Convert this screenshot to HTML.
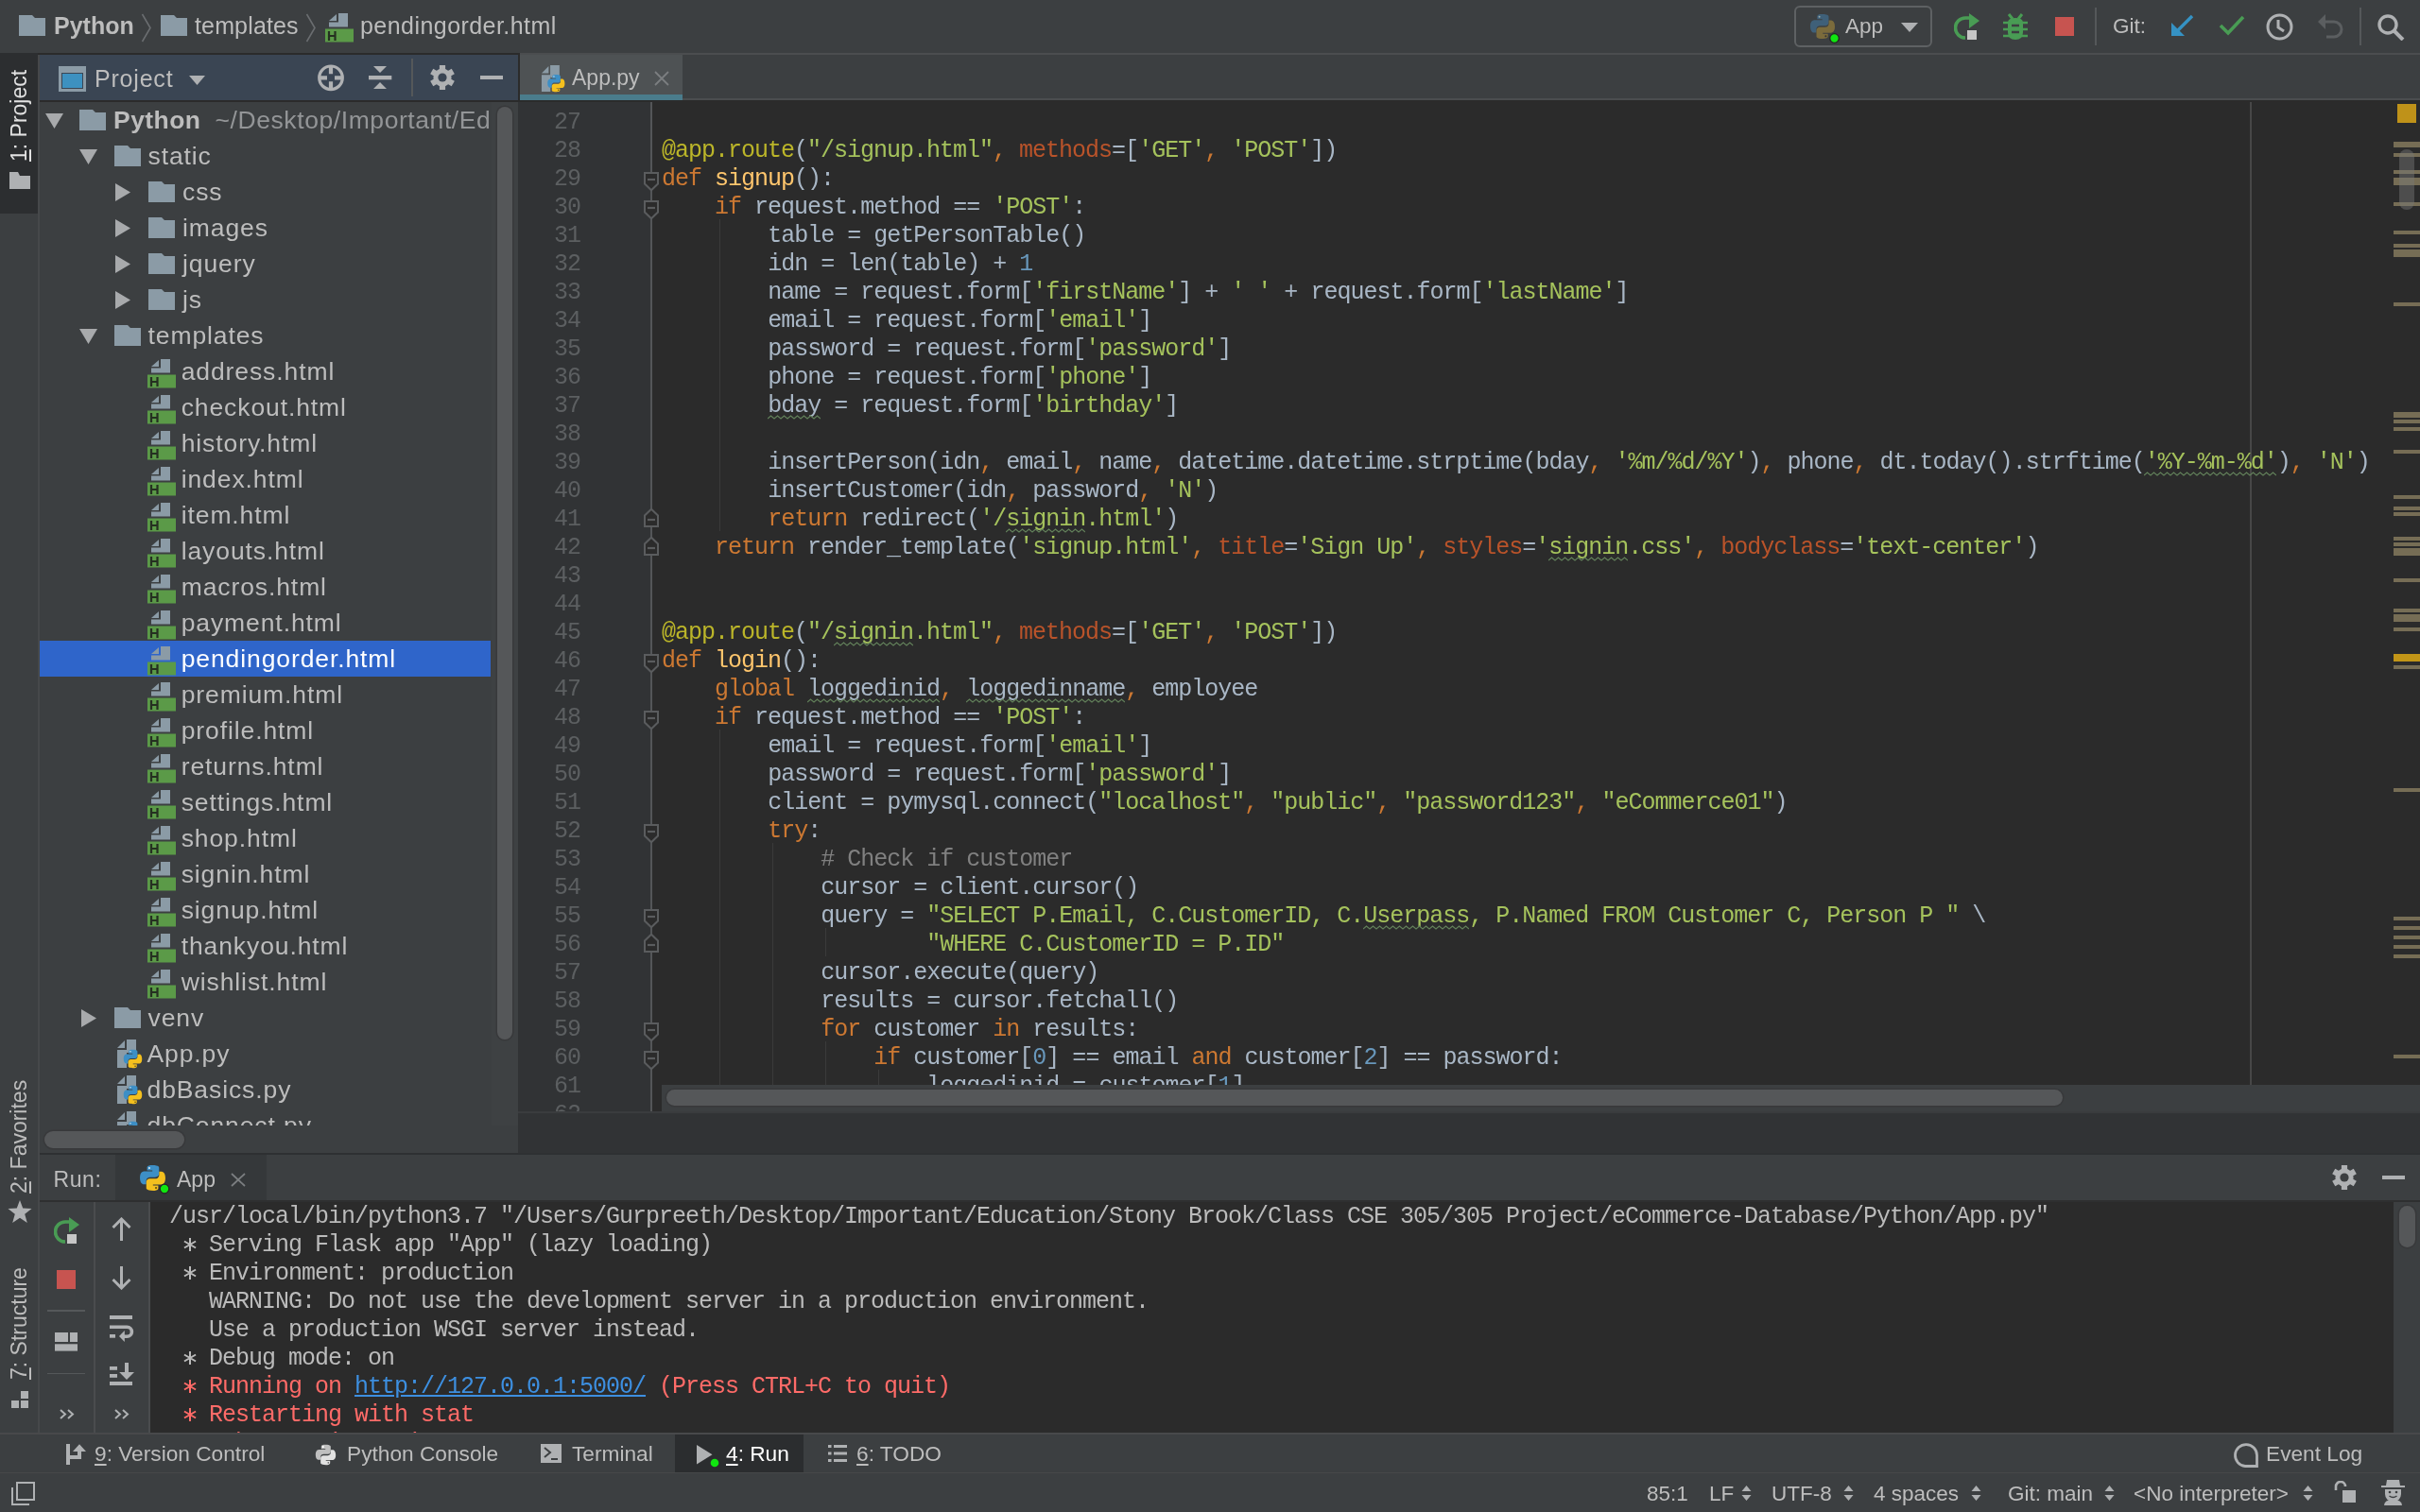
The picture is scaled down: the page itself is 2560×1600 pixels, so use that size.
<!DOCTYPE html><html><head><meta charset="utf-8"><style>
html,body{margin:0;padding:0;}
body{width:2560px;height:1600px;position:relative;overflow:hidden;background:#3c3f41;font-family:'Liberation Sans', sans-serif;}
.t{position:absolute;white-space:nowrap;line-height:0;height:0;font-family:'Liberation Sans', sans-serif;}
.t>*{}
.m{position:absolute;white-space:pre;font-family:'Liberation Mono', monospace;font-size:25px;letter-spacing:-1.0022px;line-height:0;height:0;}
</style></head><body>
<div style="position:absolute;left:0;top:0;width:2560px;height:1600px;will-change:transform">

<svg width="0" height="0" style="position:absolute">
<defs>
 <symbol id="folder" viewBox="0 0 28 22"><path d="M0 0H14L17 3H28V22H0Z" fill="#8b9ba6"/></symbol>
 <symbol id="html" viewBox="0 0 30 31">
   <path d="M4 8L12 1V8Z" fill="#8b9ba6"/>
   <path d="M14 0H24V14.5H4V9.6H14Z" fill="#8b9ba6"/>
   <rect x="0" y="16.5" width="30" height="14" fill="#5b9a48"/>
   <path d="M4 19V29M4 24H10.5M10.5 19V29" stroke="#253021" stroke-width="2.2" fill="none"/>
 </symbol>
 <symbol id="py" viewBox="0 0 28 28">
   <path d="M13.5 1C8 1 8.3 3.4 8.3 3.4V6.3H13.7V7.2H5.6S1 6.7 1 13.7c0 7 4 6.8 4 6.8H7.4v-3.3s-.1-4 4-4h5.3s3.8.1 3.8-3.7V3.6S21 1 13.5 1Z" fill="#3d8fc6"/>
   <circle cx="10.6" cy="3.8" r="1" fill="#dfe8ee"/>
   <path d="M14.5 27c5.5 0 5.2-2.4 5.2-2.4V21.7H14.3v-.9h8.1S27 21.3 27 14.3c0-7-4-6.8-4-6.8H20.6v3.3s.1 4-4 4H11.3s-3.8-.1-3.8 3.7v5.9S7 27 14.5 27Z" fill="#f4c01e"/>
   <circle cx="17.4" cy="24.2" r="1" fill="#5a4a10"/>
 </symbol>
 <symbol id="pydim" viewBox="0 0 28 28">
   <path d="M13.5 1C8 1 8.3 3.4 8.3 3.4V6.3H13.7V7.2H5.6S1 6.7 1 13.7c0 7 4 6.8 4 6.8H7.4v-3.3s-.1-4 4-4h5.3s3.8.1 3.8-3.7V3.6S21 1 13.5 1Z" fill="#3f6079"/>
   <circle cx="10.6" cy="3.8" r="1" fill="#9aa"/>
   <path d="M14.5 27c5.5 0 5.2-2.4 5.2-2.4V21.7H14.3v-.9h8.1S27 21.3 27 14.3c0-7-4-6.8-4-6.8H20.6v3.3s.1 4-4 4H11.3s-3.8-.1-3.8 3.7v5.9S7 27 14.5 27Z" fill="#7b6b3c"/>
   <circle cx="17.4" cy="24.2" r="1" fill="#333"/>
 </symbol>
 <symbol id="pyfile" viewBox="0 0 30 31">
   <path d="M1 9L9 1V9Z" fill="#8b9ba6"/>
   <path d="M11 0H21V12H11ZM1 11H11V30H1Z" fill="#8b9ba6"/>
   <rect x="11" y="0" width="10" height="14" fill="#8b9ba6"/>
   <use href="#py" x="7" y="10" width="21" height="21"/>
 </symbol>
 <symbol id="foldS" viewBox="0 0 16 20"><path d="M1 1H15V12.5L8 19.3L1 12.5Z" fill="#2b2b2b" stroke="#5a5c5e" stroke-width="2"/><path d="M4 8H12" stroke="#5a5c5e" stroke-width="2.2"/></symbol>
 <symbol id="foldE" viewBox="0 0 16 20"><path d="M1 19H15V7.5L8 0.7L1 7.5Z" fill="#2b2b2b" stroke="#5a5c5e" stroke-width="2"/><path d="M4 12H12" stroke="#5a5c5e" stroke-width="2.2"/></symbol>
  <symbol id="gear" viewBox="-13 -13 26 26"><g fill="#afb1b3"><circle r="9.6"/><rect x="-3.1" y="-13" width="6.2" height="26"/><rect x="-3.1" y="-13" width="6.2" height="26" transform="rotate(60)"/><rect x="-3.1" y="-13" width="6.2" height="26" transform="rotate(120)"/></g><circle r="4.6" fill="var(--bg)"/></symbol>
 <symbol id="updown" viewBox="0 0 11 20"><path d="M0.5 8L5.5 2L10.5 8ZM0.5 12L5.5 18L10.5 12Z" fill="#aeb0b2"/></symbol>
</defs></svg>

<div style="position:absolute;left:0px;top:0px;width:2560px;height:56px;background:#3c3f41;"></div>
<div style="position:absolute;left:0px;top:56px;width:2560px;height:2px;background:#4b4d4f;"></div>
<div style="position:absolute;left:40px;top:56px;width:510px;height:2px;background:#2b2b2b;"></div>
<div style="position:absolute;left:0px;top:56px;width:40px;height:1462px;background:#3c3f41;"></div>
<div style="position:absolute;left:0px;top:56px;width:40px;height:170px;background:#2c2e30;"></div>
<div style="position:absolute;left:40px;top:58px;width:2px;height:1459px;background:#46484a;"></div>
<svg style="position:absolute;left:20px;top:16px" width="28" height="22"><use href="#folder"/></svg>
<div class="t" style="left:57px;top:26.83px;font-size:25px;color:#bdbdbd;font-weight:bold;">Python</div>
<svg style="position:absolute;left:149px;top:14px" width="12" height="31"><path d="M1.5 1L10 15.5L1.5 30" stroke="#6a6d70" stroke-width="1.6" fill="none"/></svg>
<svg style="position:absolute;left:170px;top:16px" width="28" height="22"><use href="#folder"/></svg>
<div class="t" style="left:206px;top:26.83px;font-size:25px;color:#bdbdbd;letter-spacing:0.15px;">templates</div>
<svg style="position:absolute;left:323px;top:14px" width="12" height="31"><path d="M1.5 1L10 15.5L1.5 30" stroke="#6a6d70" stroke-width="1.6" fill="none"/></svg>
<svg style="position:absolute;left:344px;top:13.5px" width="30" height="31"><use href="#html"/></svg>
<div class="t" style="left:381px;top:26.83px;font-size:25px;color:#bdbdbd;letter-spacing:0.45px;">pendingorder.html</div>
<div style="position:absolute;left:1898px;top:6px;width:142px;height:40px;border:2px solid #5e6163;border-radius:6px;"></div>
<svg style="position:absolute;left:1914px;top:14px" width="28" height="28"><use href="#pydim"/></svg>
<svg style="position:absolute;left:1934px;top:34px" width="13" height="13"><circle cx="6.5" cy="6.5" r="4.8" fill="#10e610" stroke="#262626" stroke-width="1.3"/></svg>
<div class="t" style="left:1952px;top:28.20px;font-size:22.5px;color:#bdbdbd;">App</div>
<svg style="position:absolute;left:2010px;top:23px" width="20" height="12"><path d="M1 1H19L10 11Z" fill="#aeb0b2"/></svg>
<svg style="position:absolute;left:2067px;top:14px" width="28" height="28" viewBox="0 0 28 28">
<path d="M12 26A10.5 10.5 0 0 1 12 5H17" stroke="#499c54" stroke-width="3.6" fill="none"/>
<path d="M16 0L27 8L16 16Z" fill="#499c54"/><rect x="14" y="18" width="10" height="10" fill="#c6c6c6"/></svg>
<svg style="position:absolute;left:2119px;top:14px" width="26" height="28" viewBox="0 0 26 28">
<path d="M6 1L10 6M20 1L16 6" stroke="#499c54" stroke-width="3"/>
<path d="M5 10Q5 5 13 5Q21 5 21 10V20Q21 28 13 28Q5 28 5 20Z" fill="#499c54"/>
<path d="M0 10H26M0 17H26M0 24H26" stroke="#499c54" stroke-width="2.6"/>
<path d="M9 13H17M9 20H17" stroke="#3c3f41" stroke-width="2.6"/></svg>
<div style="position:absolute;left:2174px;top:18px;width:20px;height:20px;background:#c75450;"></div>
<div style="position:absolute;left:2215.5px;top:8px;width:2px;height:40px;background:#55585a;"></div>
<div class="t" style="left:2235px;top:28.20px;font-size:22.5px;color:#bdbdbd;">Git:</div>
<svg style="position:absolute;left:2296px;top:15px" width="25" height="24" viewBox="0 0 25 24">
<path d="M23 2L6 19" stroke="#3592c4" stroke-width="3.4"/><path d="M1 9V23H15Z" fill="#3592c4"/></svg>
<svg style="position:absolute;left:2347px;top:16px" width="28" height="22" viewBox="0 0 28 22">
<path d="M2 11L10 19L26 2" stroke="#499c54" stroke-width="3.6" fill="none"/></svg>
<svg style="position:absolute;left:2397px;top:14px" width="29" height="29" viewBox="0 0 29 29">
<circle cx="14.5" cy="14.5" r="12.5" stroke="#afb1b3" stroke-width="3" fill="none"/><path d="M13 7V15L19 19" stroke="#afb1b3" stroke-width="3" fill="none"/></svg>
<svg style="position:absolute;left:2451px;top:14px" width="28" height="27" viewBox="0 0 28 27">
<path d="M3 9H18A8 8 0 0 1 18 25H10" stroke="#5b5e60" stroke-width="3" fill="none"/><path d="M9 1V17L1 9Z" fill="#5b5e60"/></svg>
<div style="position:absolute;left:2495.5px;top:8px;width:2px;height:40px;background:#55585a;"></div>
<svg style="position:absolute;left:2515px;top:15px" width="30" height="28" viewBox="0 0 30 28">
<circle cx="11" cy="11" r="9" stroke="#afb1b3" stroke-width="3.4" fill="none"/><path d="M17.5 17.5L27 27" stroke="#afb1b3" stroke-width="4"/></svg>
<div style="position:absolute;left:42px;top:58px;width:506px;height:48px;background:#3a4553;"></div>
<div style="position:absolute;left:42px;top:106px;width:506px;height:2px;background:#2b2b2b;"></div>
<div style="position:absolute;left:548px;top:56px;width:2px;height:52px;background:#2b2b2b;"></div>
<div style="position:absolute;left:42px;top:108px;width:506px;height:1113px;background:#3c3f41;"></div>
<svg style="position:absolute;left:62px;top:70px" width="29" height="27" viewBox="0 0 29 27">
<rect x="1.5" y="1.5" width="26" height="24" fill="none" stroke="#8b9ba6" stroke-width="3"/><rect x="1" y="1" width="27" height="6" fill="#8b9ba6"/>
<rect x="4" y="8" width="21" height="15" fill="#3d91c0"/></svg>
<div class="t" style="left:100px;top:83.33px;font-size:25px;color:#bdbdbd;letter-spacing:0.8px;">Project</div>
<svg style="position:absolute;left:199px;top:79px" width="19" height="12"><path d="M1 1H18L9.5 11Z" fill="#aeb0b2"/></svg>
<svg style="position:absolute;left:336px;top:67.5px" width="29" height="29" viewBox="0 0 29 29">
<circle cx="14" cy="14.3" r="12.3" stroke="#afb1b3" stroke-width="3.2" fill="none"/>
<path d="M14 1V10.3M14 18.3V28M1 14.3H10M18 14.3H27" stroke="#afb1b3" stroke-width="4.2"/></svg>
<svg style="position:absolute;left:390px;top:70px" width="25" height="25" viewBox="0 0 25 25">
<path d="M5 0H19L12 7Z M5 24H19L12 17Z" fill="#afb1b3"/><rect x="0" y="10" width="24.3" height="4.3" fill="#afb1b3"/></svg>
<div style="position:absolute;left:434.5px;top:62px;width:2px;height:40px;background:#55585a;"></div>
<svg style="position:absolute;left:455px;top:69px;--bg:#3a4553" width="26" height="26"><use href="#gear"/></svg>
<div style="position:absolute;left:508px;top:80px;width:24px;height:4px;background:#afb1b3;"></div>
<div style="position:absolute;left:42px;top:108px;width:477px;height:1083px;overflow:hidden;">
<svg style="position:absolute;left:5.5px;top:12px" width="19" height="16"><path d="M0 0H19L9.5 16Z" fill="#a8aaac"/></svg>
<svg style="position:absolute;left:42.0px;top:8px" width="28" height="22"><use href="#folder"/></svg>
<div class="t" style="left:78.0px;top:19.41px;font-size:26.5px;letter-spacing:0.9px;color:#bdbdbd"><b style="letter-spacing:0.45px">Python</b><span style="margin-left:15px;color:#939597;letter-spacing:0.58px">~/Desktop/Important/Education/Stony Brook</span></div>
<svg style="position:absolute;left:42.0px;top:50px" width="19" height="16"><path d="M0 0H19L9.5 16Z" fill="#a8aaac"/></svg>
<svg style="position:absolute;left:78.5px;top:46px" width="28" height="22"><use href="#folder"/></svg>
<div class="t" style="left:114.5px;top:57.41px;font-size:26.5px;letter-spacing:0.9px;color:#bdbdbd">static</div>
<svg style="position:absolute;left:80.0px;top:86px" width="16" height="19"><path d="M0 0V19L16 9.5Z" fill="#a8aaac"/></svg>
<svg style="position:absolute;left:115.0px;top:84px" width="28" height="22"><use href="#folder"/></svg>
<div class="t" style="left:151.0px;top:95.41px;font-size:26.5px;letter-spacing:0.9px;color:#bdbdbd">css</div>
<svg style="position:absolute;left:80.0px;top:124px" width="16" height="19"><path d="M0 0V19L16 9.5Z" fill="#a8aaac"/></svg>
<svg style="position:absolute;left:115.0px;top:122px" width="28" height="22"><use href="#folder"/></svg>
<div class="t" style="left:151.0px;top:133.41px;font-size:26.5px;letter-spacing:0.9px;color:#bdbdbd">images</div>
<svg style="position:absolute;left:80.0px;top:162px" width="16" height="19"><path d="M0 0V19L16 9.5Z" fill="#a8aaac"/></svg>
<svg style="position:absolute;left:115.0px;top:160px" width="28" height="22"><use href="#folder"/></svg>
<div class="t" style="left:151.0px;top:171.41px;font-size:26.5px;letter-spacing:0.9px;color:#bdbdbd">jquery</div>
<svg style="position:absolute;left:80.0px;top:200px" width="16" height="19"><path d="M0 0V19L16 9.5Z" fill="#a8aaac"/></svg>
<svg style="position:absolute;left:115.0px;top:198px" width="28" height="22"><use href="#folder"/></svg>
<div class="t" style="left:151.0px;top:209.41px;font-size:26.5px;letter-spacing:0.9px;color:#bdbdbd">js</div>
<svg style="position:absolute;left:42.0px;top:240px" width="19" height="16"><path d="M0 0H19L9.5 16Z" fill="#a8aaac"/></svg>
<svg style="position:absolute;left:78.5px;top:236px" width="28" height="22"><use href="#folder"/></svg>
<div class="t" style="left:114.5px;top:247.41px;font-size:26.5px;letter-spacing:0.9px;color:#bdbdbd">templates</div>
<svg style="position:absolute;left:114px;top:271.6px" width="30" height="31"><use href="#html"/></svg>
<div class="t" style="left:149.7px;top:285.41px;font-size:26.5px;letter-spacing:0.9px;color:#bdbdbd">address.html</div>
<svg style="position:absolute;left:114px;top:309.6px" width="30" height="31"><use href="#html"/></svg>
<div class="t" style="left:149.7px;top:323.41px;font-size:26.5px;letter-spacing:0.9px;color:#bdbdbd">checkout.html</div>
<svg style="position:absolute;left:114px;top:347.6px" width="30" height="31"><use href="#html"/></svg>
<div class="t" style="left:149.7px;top:361.41px;font-size:26.5px;letter-spacing:0.9px;color:#bdbdbd">history.html</div>
<svg style="position:absolute;left:114px;top:385.6px" width="30" height="31"><use href="#html"/></svg>
<div class="t" style="left:149.7px;top:399.41px;font-size:26.5px;letter-spacing:0.9px;color:#bdbdbd">index.html</div>
<svg style="position:absolute;left:114px;top:423.6px" width="30" height="31"><use href="#html"/></svg>
<div class="t" style="left:149.7px;top:437.41px;font-size:26.5px;letter-spacing:0.9px;color:#bdbdbd">item.html</div>
<svg style="position:absolute;left:114px;top:461.6px" width="30" height="31"><use href="#html"/></svg>
<div class="t" style="left:149.7px;top:475.41px;font-size:26.5px;letter-spacing:0.9px;color:#bdbdbd">layouts.html</div>
<svg style="position:absolute;left:114px;top:499.6px" width="30" height="31"><use href="#html"/></svg>
<div class="t" style="left:149.7px;top:513.41px;font-size:26.5px;letter-spacing:0.9px;color:#bdbdbd">macros.html</div>
<svg style="position:absolute;left:114px;top:537.6px" width="30" height="31"><use href="#html"/></svg>
<div class="t" style="left:149.7px;top:551.41px;font-size:26.5px;letter-spacing:0.9px;color:#bdbdbd">payment.html</div>
<div style="position:absolute;left:0;top:570px;width:478px;height:38px;background:#2f65ca"></div>
<svg style="position:absolute;left:114px;top:575.6px" width="30" height="31"><use href="#html"/></svg>
<div class="t" style="left:149.7px;top:589.41px;font-size:26.5px;letter-spacing:0.9px;color:#ffffff">pendingorder.html</div>
<svg style="position:absolute;left:114px;top:613.6px" width="30" height="31"><use href="#html"/></svg>
<div class="t" style="left:149.7px;top:627.41px;font-size:26.5px;letter-spacing:0.9px;color:#bdbdbd">premium.html</div>
<svg style="position:absolute;left:114px;top:651.6px" width="30" height="31"><use href="#html"/></svg>
<div class="t" style="left:149.7px;top:665.41px;font-size:26.5px;letter-spacing:0.9px;color:#bdbdbd">profile.html</div>
<svg style="position:absolute;left:114px;top:689.6px" width="30" height="31"><use href="#html"/></svg>
<div class="t" style="left:149.7px;top:703.41px;font-size:26.5px;letter-spacing:0.9px;color:#bdbdbd">returns.html</div>
<svg style="position:absolute;left:114px;top:727.6px" width="30" height="31"><use href="#html"/></svg>
<div class="t" style="left:149.7px;top:741.41px;font-size:26.5px;letter-spacing:0.9px;color:#bdbdbd">settings.html</div>
<svg style="position:absolute;left:114px;top:765.6px" width="30" height="31"><use href="#html"/></svg>
<div class="t" style="left:149.7px;top:779.41px;font-size:26.5px;letter-spacing:0.9px;color:#bdbdbd">shop.html</div>
<svg style="position:absolute;left:114px;top:803.6px" width="30" height="31"><use href="#html"/></svg>
<div class="t" style="left:149.7px;top:817.41px;font-size:26.5px;letter-spacing:0.9px;color:#bdbdbd">signin.html</div>
<svg style="position:absolute;left:114px;top:841.6px" width="30" height="31"><use href="#html"/></svg>
<div class="t" style="left:149.7px;top:855.41px;font-size:26.5px;letter-spacing:0.9px;color:#bdbdbd">signup.html</div>
<svg style="position:absolute;left:114px;top:879.6px" width="30" height="31"><use href="#html"/></svg>
<div class="t" style="left:149.7px;top:893.41px;font-size:26.5px;letter-spacing:0.9px;color:#bdbdbd">thankyou.html</div>
<svg style="position:absolute;left:114px;top:917.6px" width="30" height="31"><use href="#html"/></svg>
<div class="t" style="left:149.7px;top:931.41px;font-size:26.5px;letter-spacing:0.9px;color:#bdbdbd">wishlist.html</div>
<svg style="position:absolute;left:43.5px;top:960px" width="16" height="19"><path d="M0 0V19L16 9.5Z" fill="#a8aaac"/></svg>
<svg style="position:absolute;left:78.5px;top:958px" width="28" height="22"><use href="#folder"/></svg>
<div class="t" style="left:114.5px;top:969.41px;font-size:26.5px;letter-spacing:0.9px;color:#bdbdbd">venv</div>
<svg style="position:absolute;left:81px;top:992px" width="30" height="31"><use href="#pyfile"/></svg>
<div class="t" style="left:113.5px;top:1007.41px;font-size:26.5px;letter-spacing:0.9px;color:#bdbdbd">App.py</div>
<svg style="position:absolute;left:81px;top:1030px" width="30" height="31"><use href="#pyfile"/></svg>
<div class="t" style="left:113.5px;top:1045.41px;font-size:26.5px;letter-spacing:0.9px;color:#bdbdbd">dbBasics.py</div>
<svg style="position:absolute;left:81px;top:1068px" width="30" height="31"><use href="#pyfile"/></svg>
<div class="t" style="left:113.5px;top:1083.41px;font-size:26.5px;letter-spacing:0.9px;color:#bdbdbd">dbConnect.py</div>
</div>
<div style="position:absolute;left:520px;top:108px;width:28px;height:1083px;background:#3e4143;"></div>
<div style="position:absolute;left:526px;top:113px;width:16px;height:987px;background:#555759;border-radius:9px;box-shadow:0 0 0 1.5px #38393b"></div>
<div style="position:absolute;left:47px;top:1197px;width:148px;height:18px;background:#555759;border-radius:9px;box-shadow:0 0 0 1.5px #38393b"></div>
<div style="position:absolute;left:550px;top:58px;width:2010px;height:46px;background:#3c3f41;"></div>
<div style="position:absolute;left:550px;top:104px;width:2010px;height:2px;background:#4b4d4f;"></div>
<div style="position:absolute;left:550px;top:58px;width:172px;height:42px;background:#4e5254;"></div>
<div style="position:absolute;left:550px;top:100px;width:172px;height:6px;background:#4a7c8c;"></div>
<svg style="position:absolute;left:572px;top:68px" width="28" height="31"><use href="#pyfile"/></svg>
<div class="t" style="left:605px;top:81.53px;font-size:23px;color:#bdbdbd;">App.py</div>
<svg style="position:absolute;left:692px;top:74.5px" width="16" height="16"><path d="M1 1L15 15M15 1L1 15" stroke="#7b7e80" stroke-width="1.8"/></svg>
<div style="position:absolute;left:548px;top:106px;width:2012px;height:2px;background:#2b2b2b;"></div>
<div style="position:absolute;left:548px;top:108px;width:142px;height:1068px;background:#313335;"></div>
<div style="position:absolute;left:690px;top:108px;width:1870px;height:1068px;background:#2b2b2b;"></div>
<div style="position:absolute;left:548px;top:1176px;width:2012px;height:2px;background:#3a3c3e;"></div>
<div style="position:absolute;left:548px;top:1178px;width:2012px;height:42px;background:#313335;"></div>
<div style="position:absolute;left:42px;top:1220px;width:2518px;height:2px;background:#2e3032;"></div>
<div style="position:absolute;left:548px;top:108px;width:142px;height:1068px;overflow:hidden">
<div class="m" style="left:38.0px;top:21.95px;color:#5c5f61">27</div>
<div class="m" style="left:38.0px;top:51.95px;color:#5c5f61">28</div>
<div class="m" style="left:38.0px;top:81.95px;color:#5c5f61">29</div>
<div class="m" style="left:38.0px;top:111.95px;color:#5c5f61">30</div>
<div class="m" style="left:38.0px;top:141.95px;color:#5c5f61">31</div>
<div class="m" style="left:38.0px;top:171.95px;color:#5c5f61">32</div>
<div class="m" style="left:38.0px;top:201.95px;color:#5c5f61">33</div>
<div class="m" style="left:38.0px;top:231.95px;color:#5c5f61">34</div>
<div class="m" style="left:38.0px;top:261.95px;color:#5c5f61">35</div>
<div class="m" style="left:38.0px;top:291.95px;color:#5c5f61">36</div>
<div class="m" style="left:38.0px;top:321.95px;color:#5c5f61">37</div>
<div class="m" style="left:38.0px;top:351.95px;color:#5c5f61">38</div>
<div class="m" style="left:38.0px;top:381.95px;color:#5c5f61">39</div>
<div class="m" style="left:38.0px;top:411.95px;color:#5c5f61">40</div>
<div class="m" style="left:38.0px;top:441.95px;color:#5c5f61">41</div>
<div class="m" style="left:38.0px;top:471.95px;color:#5c5f61">42</div>
<div class="m" style="left:38.0px;top:501.95px;color:#5c5f61">43</div>
<div class="m" style="left:38.0px;top:531.95px;color:#5c5f61">44</div>
<div class="m" style="left:38.0px;top:561.95px;color:#5c5f61">45</div>
<div class="m" style="left:38.0px;top:591.95px;color:#5c5f61">46</div>
<div class="m" style="left:38.0px;top:621.95px;color:#5c5f61">47</div>
<div class="m" style="left:38.0px;top:651.95px;color:#5c5f61">48</div>
<div class="m" style="left:38.0px;top:681.95px;color:#5c5f61">49</div>
<div class="m" style="left:38.0px;top:711.95px;color:#5c5f61">50</div>
<div class="m" style="left:38.0px;top:741.95px;color:#5c5f61">51</div>
<div class="m" style="left:38.0px;top:771.95px;color:#5c5f61">52</div>
<div class="m" style="left:38.0px;top:801.95px;color:#5c5f61">53</div>
<div class="m" style="left:38.0px;top:831.95px;color:#5c5f61">54</div>
<div class="m" style="left:38.0px;top:861.95px;color:#5c5f61">55</div>
<div class="m" style="left:38.0px;top:891.95px;color:#5c5f61">56</div>
<div class="m" style="left:38.0px;top:921.95px;color:#5c5f61">57</div>
<div class="m" style="left:38.0px;top:951.95px;color:#5c5f61">58</div>
<div class="m" style="left:38.0px;top:981.95px;color:#5c5f61">59</div>
<div class="m" style="left:38.0px;top:1011.95px;color:#5c5f61">60</div>
<div class="m" style="left:38.0px;top:1041.95px;color:#5c5f61">61</div>
<div class="m" style="left:38.0px;top:1071.95px;color:#5c5f61">62</div>
</div>
<div style="position:absolute;left:688.3px;top:108px;width:1.6px;height:1068px;background:#545658;"></div>
<svg style="position:absolute;left:681px;top:181.8px" width="16" height="20"><use href="#foldS"/></svg>
<svg style="position:absolute;left:681px;top:211.8px" width="16" height="20"><use href="#foldS"/></svg>
<svg style="position:absolute;left:681px;top:691.8px" width="16" height="20"><use href="#foldS"/></svg>
<svg style="position:absolute;left:681px;top:751.8px" width="16" height="20"><use href="#foldS"/></svg>
<svg style="position:absolute;left:681px;top:871.8px" width="16" height="20"><use href="#foldS"/></svg>
<svg style="position:absolute;left:681px;top:961.8px" width="16" height="20"><use href="#foldS"/></svg>
<svg style="position:absolute;left:681px;top:1081.8px" width="16" height="20"><use href="#foldS"/></svg>
<svg style="position:absolute;left:681px;top:1111.8px" width="16" height="20"><use href="#foldS"/></svg>
<svg style="position:absolute;left:681px;top:537.8px" width="16" height="20"><use href="#foldE"/></svg>
<svg style="position:absolute;left:681px;top:567.8px" width="16" height="20"><use href="#foldE"/></svg>
<svg style="position:absolute;left:681px;top:987.8px" width="16" height="20"><use href="#foldE"/></svg>
<div style="position:absolute;left:690px;top:108px;width:1842px;height:1040px;overflow:hidden">
<div style="position:absolute;left:1690px;top:0;width:1.6px;height:1040px;background:#474747"></div>
<div style="position:absolute;left:70.5px;top:124.30000000000001px;width:1.5px;height:329.99999999999994px;background:#3b3b3b"></div>
<div style="position:absolute;left:70.5px;top:664.3px;width:1.5px;height:420.0px;background:#3b3b3b"></div>
<div style="position:absolute;left:126.5px;top:784.3px;width:1.5px;height:300.0px;background:#3b3b3b"></div>
<div style="position:absolute;left:182.5px;top:874.3px;width:1.5px;height:30.0px;background:#3b3b3b"></div>
<div style="position:absolute;left:182.5px;top:994.3px;width:1.5px;height:90.0px;background:#3b3b3b"></div>
<div style="position:absolute;left:238.5px;top:1024.3px;width:1.5px;height:60.0px;background:#3b3b3b"></div>
<div class="m" style="left:10px;top:51.95px;white-space:pre"><span style="color:#bbb529">@app.route</span><span style="color:#a9b7c6">(</span><span style="color:#a5c25c">&quot;/signup.html&quot;</span><span style="color:#cc7832">,</span><span style="color:#a9b7c6"> </span><span style="color:#b9532a">methods</span><span style="color:#a9b7c6">=</span><span style="color:#a9b7c6">[</span><span style="color:#a5c25c">&#x27;GET&#x27;</span><span style="color:#cc7832">,</span><span style="color:#a9b7c6"> </span><span style="color:#a5c25c">&#x27;POST&#x27;</span><span style="color:#a9b7c6">]</span><span style="color:#a9b7c6">)</span></div>
<div class="m" style="left:10px;top:81.95px;white-space:pre"><span style="color:#cc7832">def</span><span style="color:#a9b7c6"> </span><span style="color:#ffc66d">signup</span><span style="color:#a9b7c6">(</span><span style="color:#a9b7c6">)</span><span style="color:#a9b7c6">:</span></div>
<div class="m" style="left:10px;top:111.95px;white-space:pre"><span style="color:#a9b7c6"> </span><span style="color:#a9b7c6"> </span><span style="color:#a9b7c6"> </span><span style="color:#a9b7c6"> </span><span style="color:#cc7832">if</span><span style="color:#a9b7c6"> </span><span style="color:#a9b7c6">request</span><span style="color:#a9b7c6">.</span><span style="color:#a9b7c6">method</span><span style="color:#a9b7c6"> </span><span style="color:#a9b7c6">=</span><span style="color:#a9b7c6">=</span><span style="color:#a9b7c6"> </span><span style="color:#a5c25c">&#x27;POST&#x27;</span><span style="color:#a9b7c6">:</span></div>
<div class="m" style="left:10px;top:141.95px;white-space:pre"><span style="color:#a9b7c6"> </span><span style="color:#a9b7c6"> </span><span style="color:#a9b7c6"> </span><span style="color:#a9b7c6"> </span><span style="color:#a9b7c6"> </span><span style="color:#a9b7c6"> </span><span style="color:#a9b7c6"> </span><span style="color:#a9b7c6"> </span><span style="color:#a9b7c6">table</span><span style="color:#a9b7c6"> </span><span style="color:#a9b7c6">=</span><span style="color:#a9b7c6"> </span><span style="color:#a9b7c6">getPersonTable</span><span style="color:#a9b7c6">(</span><span style="color:#a9b7c6">)</span></div>
<div class="m" style="left:10px;top:171.95px;white-space:pre"><span style="color:#a9b7c6"> </span><span style="color:#a9b7c6"> </span><span style="color:#a9b7c6"> </span><span style="color:#a9b7c6"> </span><span style="color:#a9b7c6"> </span><span style="color:#a9b7c6"> </span><span style="color:#a9b7c6"> </span><span style="color:#a9b7c6"> </span><span style="color:#a9b7c6">idn</span><span style="color:#a9b7c6"> </span><span style="color:#a9b7c6">=</span><span style="color:#a9b7c6"> </span><span style="color:#a9b7c6">len</span><span style="color:#a9b7c6">(</span><span style="color:#a9b7c6">table</span><span style="color:#a9b7c6">)</span><span style="color:#a9b7c6"> </span><span style="color:#a9b7c6">+</span><span style="color:#a9b7c6"> </span><span style="color:#6897bb">1</span></div>
<div class="m" style="left:10px;top:201.95px;white-space:pre"><span style="color:#a9b7c6"> </span><span style="color:#a9b7c6"> </span><span style="color:#a9b7c6"> </span><span style="color:#a9b7c6"> </span><span style="color:#a9b7c6"> </span><span style="color:#a9b7c6"> </span><span style="color:#a9b7c6"> </span><span style="color:#a9b7c6"> </span><span style="color:#a9b7c6">name</span><span style="color:#a9b7c6"> </span><span style="color:#a9b7c6">=</span><span style="color:#a9b7c6"> </span><span style="color:#a9b7c6">request</span><span style="color:#a9b7c6">.</span><span style="color:#a9b7c6">form</span><span style="color:#a9b7c6">[</span><span style="color:#a5c25c">&#x27;firstName&#x27;</span><span style="color:#a9b7c6">]</span><span style="color:#a9b7c6"> </span><span style="color:#a9b7c6">+</span><span style="color:#a9b7c6"> </span><span style="color:#a5c25c">&#x27; &#x27;</span><span style="color:#a9b7c6"> </span><span style="color:#a9b7c6">+</span><span style="color:#a9b7c6"> </span><span style="color:#a9b7c6">request</span><span style="color:#a9b7c6">.</span><span style="color:#a9b7c6">form</span><span style="color:#a9b7c6">[</span><span style="color:#a5c25c">&#x27;lastName&#x27;</span><span style="color:#a9b7c6">]</span></div>
<div class="m" style="left:10px;top:231.95px;white-space:pre"><span style="color:#a9b7c6"> </span><span style="color:#a9b7c6"> </span><span style="color:#a9b7c6"> </span><span style="color:#a9b7c6"> </span><span style="color:#a9b7c6"> </span><span style="color:#a9b7c6"> </span><span style="color:#a9b7c6"> </span><span style="color:#a9b7c6"> </span><span style="color:#a9b7c6">email</span><span style="color:#a9b7c6"> </span><span style="color:#a9b7c6">=</span><span style="color:#a9b7c6"> </span><span style="color:#a9b7c6">request</span><span style="color:#a9b7c6">.</span><span style="color:#a9b7c6">form</span><span style="color:#a9b7c6">[</span><span style="color:#a5c25c">&#x27;email&#x27;</span><span style="color:#a9b7c6">]</span></div>
<div class="m" style="left:10px;top:261.95px;white-space:pre"><span style="color:#a9b7c6"> </span><span style="color:#a9b7c6"> </span><span style="color:#a9b7c6"> </span><span style="color:#a9b7c6"> </span><span style="color:#a9b7c6"> </span><span style="color:#a9b7c6"> </span><span style="color:#a9b7c6"> </span><span style="color:#a9b7c6"> </span><span style="color:#a9b7c6">password</span><span style="color:#a9b7c6"> </span><span style="color:#a9b7c6">=</span><span style="color:#a9b7c6"> </span><span style="color:#a9b7c6">request</span><span style="color:#a9b7c6">.</span><span style="color:#a9b7c6">form</span><span style="color:#a9b7c6">[</span><span style="color:#a5c25c">&#x27;password&#x27;</span><span style="color:#a9b7c6">]</span></div>
<div class="m" style="left:10px;top:291.95px;white-space:pre"><span style="color:#a9b7c6"> </span><span style="color:#a9b7c6"> </span><span style="color:#a9b7c6"> </span><span style="color:#a9b7c6"> </span><span style="color:#a9b7c6"> </span><span style="color:#a9b7c6"> </span><span style="color:#a9b7c6"> </span><span style="color:#a9b7c6"> </span><span style="color:#a9b7c6">phone</span><span style="color:#a9b7c6"> </span><span style="color:#a9b7c6">=</span><span style="color:#a9b7c6"> </span><span style="color:#a9b7c6">request</span><span style="color:#a9b7c6">.</span><span style="color:#a9b7c6">form</span><span style="color:#a9b7c6">[</span><span style="color:#a5c25c">&#x27;phone&#x27;</span><span style="color:#a9b7c6">]</span></div>
<div class="m" style="left:10px;top:321.95px;white-space:pre"><span style="color:#a9b7c6"> </span><span style="color:#a9b7c6"> </span><span style="color:#a9b7c6"> </span><span style="color:#a9b7c6"> </span><span style="color:#a9b7c6"> </span><span style="color:#a9b7c6"> </span><span style="color:#a9b7c6"> </span><span style="color:#a9b7c6"> </span><span style="color:#a9b7c6">bday</span><span style="color:#a9b7c6"> </span><span style="color:#a9b7c6">=</span><span style="color:#a9b7c6"> </span><span style="color:#a9b7c6">request</span><span style="color:#a9b7c6">.</span><span style="color:#a9b7c6">form</span><span style="color:#a9b7c6">[</span><span style="color:#a5c25c">&#x27;birthday&#x27;</span><span style="color:#a9b7c6">]</span></div>
<div class="m" style="left:10px;top:381.95px;white-space:pre"><span style="color:#a9b7c6"> </span><span style="color:#a9b7c6"> </span><span style="color:#a9b7c6"> </span><span style="color:#a9b7c6"> </span><span style="color:#a9b7c6"> </span><span style="color:#a9b7c6"> </span><span style="color:#a9b7c6"> </span><span style="color:#a9b7c6"> </span><span style="color:#a9b7c6">insertPerson</span><span style="color:#a9b7c6">(</span><span style="color:#a9b7c6">idn</span><span style="color:#cc7832">,</span><span style="color:#a9b7c6"> </span><span style="color:#a9b7c6">email</span><span style="color:#cc7832">,</span><span style="color:#a9b7c6"> </span><span style="color:#a9b7c6">name</span><span style="color:#cc7832">,</span><span style="color:#a9b7c6"> </span><span style="color:#a9b7c6">datetime</span><span style="color:#a9b7c6">.</span><span style="color:#a9b7c6">datetime</span><span style="color:#a9b7c6">.</span><span style="color:#a9b7c6">strptime</span><span style="color:#a9b7c6">(</span><span style="color:#a9b7c6">bday</span><span style="color:#cc7832">,</span><span style="color:#a9b7c6"> </span><span style="color:#a5c25c">&#x27;%m/%d/%Y&#x27;</span><span style="color:#a9b7c6">)</span><span style="color:#cc7832">,</span><span style="color:#a9b7c6"> </span><span style="color:#a9b7c6">phone</span><span style="color:#cc7832">,</span><span style="color:#a9b7c6"> </span><span style="color:#a9b7c6">dt</span><span style="color:#a9b7c6">.</span><span style="color:#a9b7c6">today</span><span style="color:#a9b7c6">(</span><span style="color:#a9b7c6">)</span><span style="color:#a9b7c6">.</span><span style="color:#a9b7c6">strftime</span><span style="color:#a9b7c6">(</span><span style="color:#a5c25c">&#x27;%Y-%m-%d&#x27;</span><span style="color:#a9b7c6">)</span><span style="color:#cc7832">,</span><span style="color:#a9b7c6"> </span><span style="color:#a5c25c">&#x27;N&#x27;</span><span style="color:#a9b7c6">)</span></div>
<div class="m" style="left:10px;top:411.95px;white-space:pre"><span style="color:#a9b7c6"> </span><span style="color:#a9b7c6"> </span><span style="color:#a9b7c6"> </span><span style="color:#a9b7c6"> </span><span style="color:#a9b7c6"> </span><span style="color:#a9b7c6"> </span><span style="color:#a9b7c6"> </span><span style="color:#a9b7c6"> </span><span style="color:#a9b7c6">insertCustomer</span><span style="color:#a9b7c6">(</span><span style="color:#a9b7c6">idn</span><span style="color:#cc7832">,</span><span style="color:#a9b7c6"> </span><span style="color:#a9b7c6">password</span><span style="color:#cc7832">,</span><span style="color:#a9b7c6"> </span><span style="color:#a5c25c">&#x27;N&#x27;</span><span style="color:#a9b7c6">)</span></div>
<div class="m" style="left:10px;top:441.95px;white-space:pre"><span style="color:#a9b7c6"> </span><span style="color:#a9b7c6"> </span><span style="color:#a9b7c6"> </span><span style="color:#a9b7c6"> </span><span style="color:#a9b7c6"> </span><span style="color:#a9b7c6"> </span><span style="color:#a9b7c6"> </span><span style="color:#a9b7c6"> </span><span style="color:#cc7832">return</span><span style="color:#a9b7c6"> </span><span style="color:#a9b7c6">redirect</span><span style="color:#a9b7c6">(</span><span style="color:#a5c25c">&#x27;/signin.html&#x27;</span><span style="color:#a9b7c6">)</span></div>
<div class="m" style="left:10px;top:471.95px;white-space:pre"><span style="color:#a9b7c6"> </span><span style="color:#a9b7c6"> </span><span style="color:#a9b7c6"> </span><span style="color:#a9b7c6"> </span><span style="color:#cc7832">return</span><span style="color:#a9b7c6"> </span><span style="color:#a9b7c6">render_template</span><span style="color:#a9b7c6">(</span><span style="color:#a5c25c">&#x27;signup.html&#x27;</span><span style="color:#cc7832">,</span><span style="color:#a9b7c6"> </span><span style="color:#b9532a">title</span><span style="color:#a9b7c6">=</span><span style="color:#a5c25c">&#x27;Sign Up&#x27;</span><span style="color:#cc7832">,</span><span style="color:#a9b7c6"> </span><span style="color:#b9532a">styles</span><span style="color:#a9b7c6">=</span><span style="color:#a5c25c">&#x27;signin.css&#x27;</span><span style="color:#cc7832">,</span><span style="color:#a9b7c6"> </span><span style="color:#b9532a">bodyclass</span><span style="color:#a9b7c6">=</span><span style="color:#a5c25c">&#x27;text-center&#x27;</span><span style="color:#a9b7c6">)</span></div>
<div class="m" style="left:10px;top:561.95px;white-space:pre"><span style="color:#bbb529">@app.route</span><span style="color:#a9b7c6">(</span><span style="color:#a5c25c">&quot;/signin.html&quot;</span><span style="color:#cc7832">,</span><span style="color:#a9b7c6"> </span><span style="color:#b9532a">methods</span><span style="color:#a9b7c6">=</span><span style="color:#a9b7c6">[</span><span style="color:#a5c25c">&#x27;GET&#x27;</span><span style="color:#cc7832">,</span><span style="color:#a9b7c6"> </span><span style="color:#a5c25c">&#x27;POST&#x27;</span><span style="color:#a9b7c6">]</span><span style="color:#a9b7c6">)</span></div>
<div class="m" style="left:10px;top:591.95px;white-space:pre"><span style="color:#cc7832">def</span><span style="color:#a9b7c6"> </span><span style="color:#ffc66d">login</span><span style="color:#a9b7c6">(</span><span style="color:#a9b7c6">)</span><span style="color:#a9b7c6">:</span></div>
<div class="m" style="left:10px;top:621.95px;white-space:pre"><span style="color:#a9b7c6"> </span><span style="color:#a9b7c6"> </span><span style="color:#a9b7c6"> </span><span style="color:#a9b7c6"> </span><span style="color:#cc7832">global</span><span style="color:#a9b7c6"> </span><span style="color:#a9b7c6">loggedinid</span><span style="color:#cc7832">,</span><span style="color:#a9b7c6"> </span><span style="color:#a9b7c6">loggedinname</span><span style="color:#cc7832">,</span><span style="color:#a9b7c6"> </span><span style="color:#a9b7c6">employee</span></div>
<div class="m" style="left:10px;top:651.95px;white-space:pre"><span style="color:#a9b7c6"> </span><span style="color:#a9b7c6"> </span><span style="color:#a9b7c6"> </span><span style="color:#a9b7c6"> </span><span style="color:#cc7832">if</span><span style="color:#a9b7c6"> </span><span style="color:#a9b7c6">request</span><span style="color:#a9b7c6">.</span><span style="color:#a9b7c6">method</span><span style="color:#a9b7c6"> </span><span style="color:#a9b7c6">=</span><span style="color:#a9b7c6">=</span><span style="color:#a9b7c6"> </span><span style="color:#a5c25c">&#x27;POST&#x27;</span><span style="color:#a9b7c6">:</span></div>
<div class="m" style="left:10px;top:681.95px;white-space:pre"><span style="color:#a9b7c6"> </span><span style="color:#a9b7c6"> </span><span style="color:#a9b7c6"> </span><span style="color:#a9b7c6"> </span><span style="color:#a9b7c6"> </span><span style="color:#a9b7c6"> </span><span style="color:#a9b7c6"> </span><span style="color:#a9b7c6"> </span><span style="color:#a9b7c6">email</span><span style="color:#a9b7c6"> </span><span style="color:#a9b7c6">=</span><span style="color:#a9b7c6"> </span><span style="color:#a9b7c6">request</span><span style="color:#a9b7c6">.</span><span style="color:#a9b7c6">form</span><span style="color:#a9b7c6">[</span><span style="color:#a5c25c">&#x27;email&#x27;</span><span style="color:#a9b7c6">]</span></div>
<div class="m" style="left:10px;top:711.95px;white-space:pre"><span style="color:#a9b7c6"> </span><span style="color:#a9b7c6"> </span><span style="color:#a9b7c6"> </span><span style="color:#a9b7c6"> </span><span style="color:#a9b7c6"> </span><span style="color:#a9b7c6"> </span><span style="color:#a9b7c6"> </span><span style="color:#a9b7c6"> </span><span style="color:#a9b7c6">password</span><span style="color:#a9b7c6"> </span><span style="color:#a9b7c6">=</span><span style="color:#a9b7c6"> </span><span style="color:#a9b7c6">request</span><span style="color:#a9b7c6">.</span><span style="color:#a9b7c6">form</span><span style="color:#a9b7c6">[</span><span style="color:#a5c25c">&#x27;password&#x27;</span><span style="color:#a9b7c6">]</span></div>
<div class="m" style="left:10px;top:741.95px;white-space:pre"><span style="color:#a9b7c6"> </span><span style="color:#a9b7c6"> </span><span style="color:#a9b7c6"> </span><span style="color:#a9b7c6"> </span><span style="color:#a9b7c6"> </span><span style="color:#a9b7c6"> </span><span style="color:#a9b7c6"> </span><span style="color:#a9b7c6"> </span><span style="color:#a9b7c6">client</span><span style="color:#a9b7c6"> </span><span style="color:#a9b7c6">=</span><span style="color:#a9b7c6"> </span><span style="color:#a9b7c6">pymysql</span><span style="color:#a9b7c6">.</span><span style="color:#a9b7c6">connect</span><span style="color:#a9b7c6">(</span><span style="color:#a5c25c">&quot;localhost&quot;</span><span style="color:#cc7832">,</span><span style="color:#a9b7c6"> </span><span style="color:#a5c25c">&quot;public&quot;</span><span style="color:#cc7832">,</span><span style="color:#a9b7c6"> </span><span style="color:#a5c25c">&quot;password123&quot;</span><span style="color:#cc7832">,</span><span style="color:#a9b7c6"> </span><span style="color:#a5c25c">&quot;eCommerce01&quot;</span><span style="color:#a9b7c6">)</span></div>
<div class="m" style="left:10px;top:771.95px;white-space:pre"><span style="color:#a9b7c6"> </span><span style="color:#a9b7c6"> </span><span style="color:#a9b7c6"> </span><span style="color:#a9b7c6"> </span><span style="color:#a9b7c6"> </span><span style="color:#a9b7c6"> </span><span style="color:#a9b7c6"> </span><span style="color:#a9b7c6"> </span><span style="color:#cc7832">try</span><span style="color:#a9b7c6">:</span></div>
<div class="m" style="left:10px;top:801.95px;white-space:pre"><span style="color:#a9b7c6"> </span><span style="color:#a9b7c6"> </span><span style="color:#a9b7c6"> </span><span style="color:#a9b7c6"> </span><span style="color:#a9b7c6"> </span><span style="color:#a9b7c6"> </span><span style="color:#a9b7c6"> </span><span style="color:#a9b7c6"> </span><span style="color:#a9b7c6"> </span><span style="color:#a9b7c6"> </span><span style="color:#a9b7c6"> </span><span style="color:#a9b7c6"> </span><span style="color:#808080"># Check if customer</span></div>
<div class="m" style="left:10px;top:831.95px;white-space:pre"><span style="color:#a9b7c6"> </span><span style="color:#a9b7c6"> </span><span style="color:#a9b7c6"> </span><span style="color:#a9b7c6"> </span><span style="color:#a9b7c6"> </span><span style="color:#a9b7c6"> </span><span style="color:#a9b7c6"> </span><span style="color:#a9b7c6"> </span><span style="color:#a9b7c6"> </span><span style="color:#a9b7c6"> </span><span style="color:#a9b7c6"> </span><span style="color:#a9b7c6"> </span><span style="color:#a9b7c6">cursor</span><span style="color:#a9b7c6"> </span><span style="color:#a9b7c6">=</span><span style="color:#a9b7c6"> </span><span style="color:#a9b7c6">client</span><span style="color:#a9b7c6">.</span><span style="color:#a9b7c6">cursor</span><span style="color:#a9b7c6">(</span><span style="color:#a9b7c6">)</span></div>
<div class="m" style="left:10px;top:861.95px;white-space:pre"><span style="color:#a9b7c6"> </span><span style="color:#a9b7c6"> </span><span style="color:#a9b7c6"> </span><span style="color:#a9b7c6"> </span><span style="color:#a9b7c6"> </span><span style="color:#a9b7c6"> </span><span style="color:#a9b7c6"> </span><span style="color:#a9b7c6"> </span><span style="color:#a9b7c6"> </span><span style="color:#a9b7c6"> </span><span style="color:#a9b7c6"> </span><span style="color:#a9b7c6"> </span><span style="color:#a9b7c6">query</span><span style="color:#a9b7c6"> </span><span style="color:#a9b7c6">=</span><span style="color:#a9b7c6"> </span><span style="color:#a5c25c">&quot;SELECT P.Email, C.CustomerID, C.Userpass, P.Named FROM Customer C, Person P &quot;</span><span style="color:#a9b7c6"> </span><span style="color:#a9b7c6">\</span></div>
<div class="m" style="left:10px;top:891.95px;white-space:pre"><span style="color:#a9b7c6"> </span><span style="color:#a9b7c6"> </span><span style="color:#a9b7c6"> </span><span style="color:#a9b7c6"> </span><span style="color:#a9b7c6"> </span><span style="color:#a9b7c6"> </span><span style="color:#a9b7c6"> </span><span style="color:#a9b7c6"> </span><span style="color:#a9b7c6"> </span><span style="color:#a9b7c6"> </span><span style="color:#a9b7c6"> </span><span style="color:#a9b7c6"> </span><span style="color:#a9b7c6"> </span><span style="color:#a9b7c6"> </span><span style="color:#a9b7c6"> </span><span style="color:#a9b7c6"> </span><span style="color:#a9b7c6"> </span><span style="color:#a9b7c6"> </span><span style="color:#a9b7c6"> </span><span style="color:#a9b7c6"> </span><span style="color:#a5c25c">&quot;WHERE C.CustomerID = P.ID&quot;</span></div>
<div class="m" style="left:10px;top:921.95px;white-space:pre"><span style="color:#a9b7c6"> </span><span style="color:#a9b7c6"> </span><span style="color:#a9b7c6"> </span><span style="color:#a9b7c6"> </span><span style="color:#a9b7c6"> </span><span style="color:#a9b7c6"> </span><span style="color:#a9b7c6"> </span><span style="color:#a9b7c6"> </span><span style="color:#a9b7c6"> </span><span style="color:#a9b7c6"> </span><span style="color:#a9b7c6"> </span><span style="color:#a9b7c6"> </span><span style="color:#a9b7c6">cursor</span><span style="color:#a9b7c6">.</span><span style="color:#a9b7c6">execute</span><span style="color:#a9b7c6">(</span><span style="color:#a9b7c6">query</span><span style="color:#a9b7c6">)</span></div>
<div class="m" style="left:10px;top:951.95px;white-space:pre"><span style="color:#a9b7c6"> </span><span style="color:#a9b7c6"> </span><span style="color:#a9b7c6"> </span><span style="color:#a9b7c6"> </span><span style="color:#a9b7c6"> </span><span style="color:#a9b7c6"> </span><span style="color:#a9b7c6"> </span><span style="color:#a9b7c6"> </span><span style="color:#a9b7c6"> </span><span style="color:#a9b7c6"> </span><span style="color:#a9b7c6"> </span><span style="color:#a9b7c6"> </span><span style="color:#a9b7c6">results</span><span style="color:#a9b7c6"> </span><span style="color:#a9b7c6">=</span><span style="color:#a9b7c6"> </span><span style="color:#a9b7c6">cursor</span><span style="color:#a9b7c6">.</span><span style="color:#a9b7c6">fetchall</span><span style="color:#a9b7c6">(</span><span style="color:#a9b7c6">)</span></div>
<div class="m" style="left:10px;top:981.95px;white-space:pre"><span style="color:#a9b7c6"> </span><span style="color:#a9b7c6"> </span><span style="color:#a9b7c6"> </span><span style="color:#a9b7c6"> </span><span style="color:#a9b7c6"> </span><span style="color:#a9b7c6"> </span><span style="color:#a9b7c6"> </span><span style="color:#a9b7c6"> </span><span style="color:#a9b7c6"> </span><span style="color:#a9b7c6"> </span><span style="color:#a9b7c6"> </span><span style="color:#a9b7c6"> </span><span style="color:#cc7832">for</span><span style="color:#a9b7c6"> </span><span style="color:#a9b7c6">customer</span><span style="color:#a9b7c6"> </span><span style="color:#cc7832">in</span><span style="color:#a9b7c6"> </span><span style="color:#a9b7c6">results</span><span style="color:#a9b7c6">:</span></div>
<div class="m" style="left:10px;top:1011.95px;white-space:pre"><span style="color:#a9b7c6"> </span><span style="color:#a9b7c6"> </span><span style="color:#a9b7c6"> </span><span style="color:#a9b7c6"> </span><span style="color:#a9b7c6"> </span><span style="color:#a9b7c6"> </span><span style="color:#a9b7c6"> </span><span style="color:#a9b7c6"> </span><span style="color:#a9b7c6"> </span><span style="color:#a9b7c6"> </span><span style="color:#a9b7c6"> </span><span style="color:#a9b7c6"> </span><span style="color:#a9b7c6"> </span><span style="color:#a9b7c6"> </span><span style="color:#a9b7c6"> </span><span style="color:#a9b7c6"> </span><span style="color:#cc7832">if</span><span style="color:#a9b7c6"> </span><span style="color:#a9b7c6">customer</span><span style="color:#a9b7c6">[</span><span style="color:#6897bb">0</span><span style="color:#a9b7c6">]</span><span style="color:#a9b7c6"> </span><span style="color:#a9b7c6">=</span><span style="color:#a9b7c6">=</span><span style="color:#a9b7c6"> </span><span style="color:#a9b7c6">email</span><span style="color:#a9b7c6"> </span><span style="color:#cc7832">and</span><span style="color:#a9b7c6"> </span><span style="color:#a9b7c6">customer</span><span style="color:#a9b7c6">[</span><span style="color:#6897bb">2</span><span style="color:#a9b7c6">]</span><span style="color:#a9b7c6"> </span><span style="color:#a9b7c6">=</span><span style="color:#a9b7c6">=</span><span style="color:#a9b7c6"> </span><span style="color:#a9b7c6">password</span><span style="color:#a9b7c6">:</span></div>
<div class="m" style="left:10px;top:1041.95px;white-space:pre"><span style="color:#a9b7c6"> </span><span style="color:#a9b7c6"> </span><span style="color:#a9b7c6"> </span><span style="color:#a9b7c6"> </span><span style="color:#a9b7c6"> </span><span style="color:#a9b7c6"> </span><span style="color:#a9b7c6"> </span><span style="color:#a9b7c6"> </span><span style="color:#a9b7c6"> </span><span style="color:#a9b7c6"> </span><span style="color:#a9b7c6"> </span><span style="color:#a9b7c6"> </span><span style="color:#a9b7c6"> </span><span style="color:#a9b7c6"> </span><span style="color:#a9b7c6"> </span><span style="color:#a9b7c6"> </span><span style="color:#a9b7c6"> </span><span style="color:#a9b7c6"> </span><span style="color:#a9b7c6"> </span><span style="color:#a9b7c6"> </span><span style="color:#a9b7c6">loggedinid</span><span style="color:#a9b7c6"> </span><span style="color:#a9b7c6">=</span><span style="color:#a9b7c6"> </span><span style="color:#a9b7c6">customer</span><span style="color:#a9b7c6">[</span><span style="color:#6897bb">1</span><span style="color:#a9b7c6">]</span></div>
<div class="m" style="left:10px;top:1071.95px;white-space:pre"><span style="color:#a9b7c6"> </span><span style="color:#a9b7c6"> </span><span style="color:#a9b7c6"> </span><span style="color:#a9b7c6"> </span><span style="color:#a9b7c6"> </span><span style="color:#a9b7c6"> </span><span style="color:#a9b7c6"> </span><span style="color:#a9b7c6"> </span><span style="color:#a9b7c6"> </span><span style="color:#a9b7c6"> </span><span style="color:#a9b7c6"> </span><span style="color:#a9b7c6"> </span><span style="color:#a9b7c6"> </span><span style="color:#a9b7c6"> </span><span style="color:#a9b7c6"> </span><span style="color:#a9b7c6"> </span><span style="color:#a9b7c6"> </span><span style="color:#a9b7c6"> </span><span style="color:#a9b7c6"> </span><span style="color:#a9b7c6"> </span><span style="color:#a9b7c6">loggedinname</span><span style="color:#a9b7c6"> </span><span style="color:#a9b7c6">=</span><span style="color:#a9b7c6"> </span><span style="color:#a9b7c6">customer</span><span style="color:#a9b7c6">[</span><span style="color:#6897bb">3</span><span style="color:#a9b7c6">]</span></div>
<svg style="position:absolute;left:122.0px;top:331.3px" width="56.0" height="5"><polyline points="0.0,4 3.5,1 7.0,4 10.5,1 14.0,4 17.5,1 21.0,4 24.5,1 28.0,4 31.5,1 35.0,4 38.5,1 42.0,4 45.5,1 49.0,4 52.5,1 56.0,4" stroke="#62805a" stroke-width="1.2" fill="none"/></svg>
<svg style="position:absolute;left:1578.0px;top:391.3px" width="140.0" height="5"><polyline points="0.0,4 3.5,1 7.0,4 10.5,1 14.0,4 17.5,1 21.0,4 24.5,1 28.0,4 31.5,1 35.0,4 38.5,1 42.0,4 45.5,1 49.0,4 52.5,1 56.0,4 59.5,1 63.0,4 66.5,1 70.0,4 73.5,1 77.0,4 80.5,1 84.0,4 87.5,1 91.0,4 94.5,1 98.0,4 101.5,1 105.0,4 108.5,1 112.0,4 115.5,1 119.0,4 122.5,1 126.0,4 129.5,1 133.0,4 136.5,1 140.0,4" stroke="#62805a" stroke-width="1.2" fill="none"/></svg>
<svg style="position:absolute;left:374.0px;top:451.29999999999995px" width="84.0" height="5"><polyline points="0.0,4 3.5,1 7.0,4 10.5,1 14.0,4 17.5,1 21.0,4 24.5,1 28.0,4 31.5,1 35.0,4 38.5,1 42.0,4 45.5,1 49.0,4 52.5,1 56.0,4 59.5,1 63.0,4 66.5,1 70.0,4 73.5,1 77.0,4 80.5,1 84.0,4" stroke="#62805a" stroke-width="1.2" fill="none"/></svg>
<svg style="position:absolute;left:948.0px;top:481.29999999999995px" width="84.0" height="5"><polyline points="0.0,4 3.5,1 7.0,4 10.5,1 14.0,4 17.5,1 21.0,4 24.5,1 28.0,4 31.5,1 35.0,4 38.5,1 42.0,4 45.5,1 49.0,4 52.5,1 56.0,4 59.5,1 63.0,4 66.5,1 70.0,4 73.5,1 77.0,4 80.5,1 84.0,4" stroke="#62805a" stroke-width="1.2" fill="none"/></svg>
<svg style="position:absolute;left:192.0px;top:571.3px" width="84.0" height="5"><polyline points="0.0,4 3.5,1 7.0,4 10.5,1 14.0,4 17.5,1 21.0,4 24.5,1 28.0,4 31.5,1 35.0,4 38.5,1 42.0,4 45.5,1 49.0,4 52.5,1 56.0,4 59.5,1 63.0,4 66.5,1 70.0,4 73.5,1 77.0,4 80.5,1 84.0,4" stroke="#62805a" stroke-width="1.2" fill="none"/></svg>
<svg style="position:absolute;left:164.0px;top:631.3px" width="140.0" height="5"><polyline points="0.0,4 3.5,1 7.0,4 10.5,1 14.0,4 17.5,1 21.0,4 24.5,1 28.0,4 31.5,1 35.0,4 38.5,1 42.0,4 45.5,1 49.0,4 52.5,1 56.0,4 59.5,1 63.0,4 66.5,1 70.0,4 73.5,1 77.0,4 80.5,1 84.0,4 87.5,1 91.0,4 94.5,1 98.0,4 101.5,1 105.0,4 108.5,1 112.0,4 115.5,1 119.0,4 122.5,1 126.0,4 129.5,1 133.0,4 136.5,1 140.0,4" stroke="#62805a" stroke-width="1.2" fill="none"/></svg>
<svg style="position:absolute;left:332.0px;top:631.3px" width="168.0" height="5"><polyline points="0.0,4 3.5,1 7.0,4 10.5,1 14.0,4 17.5,1 21.0,4 24.5,1 28.0,4 31.5,1 35.0,4 38.5,1 42.0,4 45.5,1 49.0,4 52.5,1 56.0,4 59.5,1 63.0,4 66.5,1 70.0,4 73.5,1 77.0,4 80.5,1 84.0,4 87.5,1 91.0,4 94.5,1 98.0,4 101.5,1 105.0,4 108.5,1 112.0,4 115.5,1 119.0,4 122.5,1 126.0,4 129.5,1 133.0,4 136.5,1 140.0,4 143.5,1 147.0,4 150.5,1 154.0,4 157.5,1 161.0,4 164.5,1 168.0,4" stroke="#62805a" stroke-width="1.2" fill="none"/></svg>
<svg style="position:absolute;left:752.0px;top:871.3px" width="112.0" height="5"><polyline points="0.0,4 3.5,1 7.0,4 10.5,1 14.0,4 17.5,1 21.0,4 24.5,1 28.0,4 31.5,1 35.0,4 38.5,1 42.0,4 45.5,1 49.0,4 52.5,1 56.0,4 59.5,1 63.0,4 66.5,1 70.0,4 73.5,1 77.0,4 80.5,1 84.0,4 87.5,1 91.0,4 94.5,1 98.0,4 101.5,1 105.0,4 108.5,1 112.0,4" stroke="#62805a" stroke-width="1.2" fill="none"/></svg>
</div>
<div style="position:absolute;left:2532px;top:149.6px;width:28px;height:6.400000000000006px;background:#766d55;"></div>
<div style="position:absolute;left:2532px;top:162px;width:28px;height:4px;background:#766d55;"></div>
<div style="position:absolute;left:2532px;top:180px;width:28px;height:4px;background:#766d55;"></div>
<div style="position:absolute;left:2532px;top:188px;width:28px;height:8px;background:#766d55;"></div>
<div style="position:absolute;left:2532px;top:213.7px;width:28px;height:4.0px;background:#766d55;"></div>
<div style="position:absolute;left:2532px;top:243.8px;width:28px;height:4.0px;background:#766d55;"></div>
<div style="position:absolute;left:2532px;top:258px;width:28px;height:4px;background:#766d55;"></div>
<div style="position:absolute;left:2532px;top:264px;width:28px;height:8px;background:#766d55;"></div>
<div style="position:absolute;left:2532px;top:319.8px;width:28px;height:4.0px;background:#766d55;"></div>
<div style="position:absolute;left:2532px;top:435.7px;width:28px;height:6.100000000000023px;background:#766d55;"></div>
<div style="position:absolute;left:2532px;top:444px;width:28px;height:4px;background:#766d55;"></div>
<div style="position:absolute;left:2532px;top:452px;width:28px;height:4px;background:#766d55;"></div>
<div style="position:absolute;left:2532px;top:476px;width:28px;height:4px;background:#766d55;"></div>
<div style="position:absolute;left:2532px;top:523.5px;width:28px;height:4.2999999999999545px;background:#766d55;"></div>
<div style="position:absolute;left:2532px;top:536px;width:28px;height:4px;background:#766d55;"></div>
<div style="position:absolute;left:2532px;top:542px;width:28px;height:4px;background:#766d55;"></div>
<div style="position:absolute;left:2532px;top:567.7px;width:28px;height:4.2999999999999545px;background:#766d55;"></div>
<div style="position:absolute;left:2532px;top:573.8px;width:28px;height:4.2000000000000455px;background:#766d55;"></div>
<div style="position:absolute;left:2532px;top:580px;width:28px;height:7.7999999999999545px;background:#766d55;"></div>
<div style="position:absolute;left:2532px;top:611.6px;width:28px;height:4.0px;background:#766d55;"></div>
<div style="position:absolute;left:2532px;top:644px;width:28px;height:4px;background:#766d55;"></div>
<div style="position:absolute;left:2532px;top:650px;width:28px;height:8px;background:#766d55;"></div>
<div style="position:absolute;left:2532px;top:663.8px;width:28px;height:3.900000000000091px;background:#766d55;"></div>
<div style="position:absolute;left:2532px;top:703.7px;width:28px;height:4.2999999999999545px;background:#766d55;"></div>
<div style="position:absolute;left:2532px;top:833.7px;width:28px;height:4.2999999999999545px;background:#766d55;"></div>
<div style="position:absolute;left:2532px;top:969.7px;width:28px;height:4.099999999999909px;background:#766d55;"></div>
<div style="position:absolute;left:2532px;top:979.7px;width:28px;height:4.2999999999999545px;background:#766d55;"></div>
<div style="position:absolute;left:2532px;top:989.8px;width:28px;height:4.2000000000000455px;background:#766d55;"></div>
<div style="position:absolute;left:2532px;top:999.8px;width:28px;height:4.2000000000000455px;background:#766d55;"></div>
<div style="position:absolute;left:2532px;top:1010px;width:28px;height:4px;background:#766d55;"></div>
<div style="position:absolute;left:2532px;top:1115.7px;width:28px;height:4.2999999999999545px;background:#766d55;"></div>
<div style="position:absolute;left:2532px;top:691.8px;width:28px;height:8.5px;background:#c29517;"></div>
<div style="position:absolute;left:2536px;top:110px;width:20px;height:20px;background:#bf9219;"></div>
<div style="position:absolute;left:2538px;top:158px;width:16px;height:64px;background:rgba(120,120,120,0.45);border-radius:8px"></div>
<div style="position:absolute;left:700px;top:1148px;width:1860px;height:28px;background:#3c3f41;"></div>
<div style="position:absolute;left:705px;top:1153px;width:1477px;height:17px;background:#555759;border-radius:9px;box-shadow:0 0 0 1.5px #38393b"></div>
<div style="position:absolute;left:42px;top:1222px;width:2518px;height:48px;background:#3c3f41;"></div>
<div style="position:absolute;left:122px;top:1222px;width:160px;height:48px;background:#35383a;"></div>
<div class="t" style="left:56.5px;top:1247.53px;font-size:23px;color:#bdbdbd;letter-spacing:0.6px;">Run:</div>
<svg style="position:absolute;left:147px;top:1232px" width="29" height="29"><use href="#py"/></svg>
<svg style="position:absolute;left:167px;top:1251px" width="14" height="14"><circle cx="7" cy="7" r="4.8" fill="#10e610" stroke="#262626" stroke-width="1.3"/></svg>
<div class="t" style="left:187px;top:1247.53px;font-size:23px;color:#bdbdbd;">App</div>
<svg style="position:absolute;left:244px;top:1240.5px" width="16" height="15"><path d="M1 1L15 14M15 1L1 14" stroke="#7b7e80" stroke-width="1.8"/></svg>
<svg style="position:absolute;left:2467px;top:1233px;--bg:#3c3f41" width="26" height="26"><use href="#gear"/></svg>
<div style="position:absolute;left:2520px;top:1244px;width:24px;height:4px;background:#afb1b3;"></div>
<div style="position:absolute;left:42px;top:1270px;width:2518px;height:1.5px;background:#2e2f30;"></div>
<div style="position:absolute;left:42px;top:1271.5px;width:116px;height:244px;background:#3c3f41;"></div>
<div style="position:absolute;left:99px;top:1271.5px;width:1.5px;height:244px;background:#4a4c4e;"></div>
<div style="position:absolute;left:157px;top:1271.5px;width:1.5px;height:244px;background:#4a4c4e;"></div>
<div style="position:absolute;left:158.5px;top:1271.5px;width:2373.5px;height:244px;background:#2b2b2b;"></div>
<div style="position:absolute;left:2532px;top:1271.5px;width:28px;height:244px;background:#3c3f41;"></div>
<div style="position:absolute;left:2537.5px;top:1276px;width:17px;height:44px;background:#555759;border-radius:9px;box-shadow:0 0 0 1.5px #38393b"></div>
<svg style="position:absolute;left:57px;top:1288px" width="28" height="28" viewBox="0 0 28 28">
<path d="M12 26A10.5 10.5 0 0 1 12 5H17" stroke="#499c54" stroke-width="3.6" fill="none"/>
<path d="M16 0L27 8L16 16Z" fill="#499c54"/><rect x="14" y="18" width="10" height="10" fill="#c6c6c6"/></svg>
<div style="position:absolute;left:60px;top:1344px;width:20px;height:20px;background:#c75450;"></div>
<div style="position:absolute;left:50px;top:1386px;width:40px;height:1.5px;background:#55585a;"></div>
<svg style="position:absolute;left:58px;top:1410px" width="25" height="20" viewBox="0 0 25 20">
<rect x="0" y="0" width="14" height="10" fill="#afb1b3"/><rect x="16" y="0" width="8" height="10" fill="#afb1b3"/><rect x="0" y="12.3" width="24" height="7.3" fill="#afb1b3"/></svg>
<div style="position:absolute;left:50px;top:1452.5px;width:40px;height:1.5px;background:#55585a;"></div>
<svg style="position:absolute;left:63px;top:1491px" width="16" height="12"><path d="M1 1L6 5.5L1 10M9 1L14 5.5L9 10" stroke="#afb1b3" stroke-width="2" fill="none"/></svg>
<svg style="position:absolute;left:118px;top:1288px" width="21" height="25" viewBox="0 0 21 25">
<path d="M10.5 3V25" stroke="#afb1b3" stroke-width="3"/><path d="M1.5 11L10.5 2L19.5 11" stroke="#afb1b3" stroke-width="3" fill="none"/></svg>
<svg style="position:absolute;left:118px;top:1340px" width="21" height="25" viewBox="0 0 21 25">
<path d="M10.5 0V22" stroke="#afb1b3" stroke-width="3"/><path d="M1.5 14L10.5 23L19.5 14" stroke="#afb1b3" stroke-width="3" fill="none"/></svg>
<svg style="position:absolute;left:115px;top:1390px" width="28" height="32" viewBox="0 0 28 32">
<rect x="1" y="2" width="24" height="4" fill="#afb1b3"/><rect x="1" y="22" width="6" height="3.7" fill="#afb1b3"/>
<path d="M1 14.2H19.4A5 5 0 0 1 19.4 24.2H15.5" stroke="#afb1b3" stroke-width="3.6" fill="none"/><path d="M11 24L16.8 18V30Z" fill="#afb1b3"/></svg>
<svg style="position:absolute;left:115px;top:1440px" width="28" height="28" viewBox="0 0 28 28">
<rect x="1" y="6" width="8" height="3.8" fill="#afb1b3"/><rect x="1" y="14" width="8" height="3.8" fill="#afb1b3"/><rect x="1" y="22" width="24" height="4" fill="#afb1b3"/>
<rect x="17" y="2" width="4" height="11" fill="#afb1b3"/><path d="M11.2 12H27L19 20Z" fill="#afb1b3"/></svg>
<svg style="position:absolute;left:121px;top:1491px" width="16" height="12"><path d="M1 1L6 5.5L1 10M9 1L14 5.5L9 10" stroke="#afb1b3" stroke-width="2" fill="none"/></svg>
<div style="position:absolute;left:158.5px;top:1271.5px;width:2373px;height:244px;overflow:hidden">
<div class="m" style="left:20.5px;top:16.75px;color:#bbbbbb;white-space:pre">/usr/local/bin/python3.7 "/Users/Gurpreeth/Desktop/Important/Education/Stony Brook/Class CSE 305/305 Project/eCommerce-Database/Python/App.py"</div>
<svg style="position:absolute;left:34.69999999999999px;top:37.09999999999991px" width="16" height="16" viewBox="-8 -8 16 16"><path d="M0 -7V7M-6.06 -3.5L6.06 3.5M-6.06 3.5L6.06 -3.5" stroke="#bbbbbb" stroke-width="2"/></svg>
<div class="m" style="left:20.5px;top:46.75px;color:#bbbbbb;white-space:pre">   Serving Flask app "App" (lazy loading)</div>
<svg style="position:absolute;left:34.69999999999999px;top:67.09999999999991px" width="16" height="16" viewBox="-8 -8 16 16"><path d="M0 -7V7M-6.06 -3.5L6.06 3.5M-6.06 3.5L6.06 -3.5" stroke="#bbbbbb" stroke-width="2"/></svg>
<div class="m" style="left:20.5px;top:76.75px;color:#bbbbbb;white-space:pre">   Environment: production</div>
<div class="m" style="left:20.5px;top:106.75px;color:#bbbbbb;white-space:pre">   WARNING: Do not use the development server in a production environment.</div>
<div class="m" style="left:20.5px;top:136.75px;color:#bbbbbb;white-space:pre">   Use a production WSGI server instead.</div>
<svg style="position:absolute;left:34.69999999999999px;top:157.0999999999999px" width="16" height="16" viewBox="-8 -8 16 16"><path d="M0 -7V7M-6.06 -3.5L6.06 3.5M-6.06 3.5L6.06 -3.5" stroke="#bbbbbb" stroke-width="2"/></svg>
<div class="m" style="left:20.5px;top:166.75px;color:#bbbbbb;white-space:pre">   Debug mode: on</div>
<svg style="position:absolute;left:34.69999999999999px;top:187.0999999999999px" width="16" height="16" viewBox="-8 -8 16 16"><path d="M0 -7V7M-6.06 -3.5L6.06 3.5M-6.06 3.5L6.06 -3.5" stroke="#ff6b68" stroke-width="2"/></svg>
<div class="m" style="left:20.5px;top:196.75px;color:#ff6b68;white-space:pre">   Running on <u style="color:#3d8fe0">http://127.0.0.1:5000/</u> (Press CTRL+C to quit)</div>
<svg style="position:absolute;left:34.69999999999999px;top:217.0999999999999px" width="16" height="16" viewBox="-8 -8 16 16"><path d="M0 -7V7M-6.06 -3.5L6.06 3.5M-6.06 3.5L6.06 -3.5" stroke="#ff6b68" stroke-width="2"/></svg>
<div class="m" style="left:20.5px;top:226.75px;color:#ff6b68;white-space:pre">   Restarting with stat</div>
<svg style="position:absolute;left:34.69999999999999px;top:247.0999999999999px" width="16" height="16" viewBox="-8 -8 16 16"><path d="M0 -7V7M-6.06 -3.5L6.06 3.5M-6.06 3.5L6.06 -3.5" stroke="#ff6b68" stroke-width="2"/></svg>
<div class="m" style="left:20.5px;top:256.75px;color:#ff6b68;white-space:pre">   Debugger is active!</div>
</div>
<div style="position:absolute;left:0px;top:1516px;width:2560px;height:1.8px;background:#48494b;"></div>
<div style="position:absolute;left:0px;top:1517.8px;width:2560px;height:40.2px;background:#3c3f41;"></div>
<div style="position:absolute;left:0px;top:1558px;width:2560px;height:1.2px;background:#464849;"></div>
<div style="position:absolute;left:0px;top:1559.2px;width:2560px;height:41px;background:#3c3f41;"></div>
<svg style="position:absolute;left:70px;top:1527px" width="22" height="24" viewBox="0 0 22 24">
<path d="M0 1H4V23H0ZM4 13H16V17H4ZM12 9H16V17H12ZM7 9L14 1.2L21 9Z" fill="#afb1b3"/></svg>
<div class="t" style="left:100px;top:1538.33px;font-size:22.7px;color:#bdbdbd"><u style="text-underline-offset:3px">9</u>: Version Control</div>
<svg style="position:absolute;left:333px;top:1528px" width="23" height="23"><use href="#pydim" width="23" height="23" style="filter:grayscale(1) brightness(2.1)"/></svg>
<div class="t" style="left:367px;top:1538.33px;font-size:22.7px;color:#bdbdbd;">Python Console</div>
<svg style="position:absolute;left:572px;top:1528px" width="22" height="20" viewBox="0 0 22 20">
<rect width="22" height="20" fill="#afb1b3"/><path d="M4 4L10 9L4 14" stroke="#3c3f41" stroke-width="2" fill="none"/><path d="M11 16H18" stroke="#3c3f41" stroke-width="2"/></svg>
<div class="t" style="left:605px;top:1538.33px;font-size:22.7px;color:#bdbdbd;">Terminal</div>
<div style="position:absolute;left:714px;top:1518px;width:136px;height:40px;background:#2b2d2f;"></div>
<svg style="position:absolute;left:737px;top:1529px" width="17" height="21"><path d="M0 0V20.5L16.5 10.25Z" fill="#afb1b3"/></svg>
<svg style="position:absolute;left:751px;top:1543px" width="10" height="10"><circle cx="5" cy="5" r="4.3" fill="#10e610"/></svg>
<div class="t" style="left:768px;top:1538.33px;font-size:22.7px;color:#ffffff"><u style="text-underline-offset:3px">4</u>: Run</div>
<svg style="position:absolute;left:876px;top:1529px" width="20" height="18" viewBox="0 0 20 18">
<path d="M0 1.5H3.5M6 1.5H20M0 9H3.5M6 9H20M0 16.5H3.5M6 16.5H20" stroke="#afb1b3" stroke-width="3"/></svg>
<div class="t" style="left:906px;top:1538.33px;font-size:22.7px;color:#bdbdbd"><u style="text-underline-offset:3px">6</u>: TODO</div>
<svg style="position:absolute;left:2362px;top:1527px" width="27" height="26" viewBox="0 0 27 26">
<path d="M25.5 24.5H13A11.5 11.5 0 1 1 25.5 13Z" stroke="#afb1b3" stroke-width="2.8" fill="none"/></svg>
<div class="t" style="left:2397px;top:1538.33px;font-size:22.7px;color:#bdbdbd;">Event Log</div>
<svg style="position:absolute;left:12px;top:1568px" width="25" height="25" viewBox="0 0 25 25">
<path d="M1 6V24H19" stroke="#afb1b3" stroke-width="2" fill="none"/><rect x="6" y="1" width="18" height="18" stroke="#afb1b3" stroke-width="2" fill="none"/></svg>
<div class="t" style="left:1742px;top:1580.70px;font-size:22.5px;color:#bdbdbd;">85:1</div>
<div class="t" style="left:1808px;top:1580.70px;font-size:22.5px;color:#bdbdbd;">LF</div>
<div class="t" style="left:1874px;top:1580.70px;font-size:22.5px;color:#bdbdbd;">UTF-8</div>
<div class="t" style="left:1982px;top:1580.70px;font-size:22.5px;color:#bdbdbd;">4 spaces</div>
<div class="t" style="left:2124px;top:1580.70px;font-size:22.5px;color:#bdbdbd;">Git: main</div>
<div class="t" style="left:2257px;top:1580.70px;font-size:22.5px;color:#bdbdbd;">&lt;No interpreter&gt;</div>
<svg style="position:absolute;left:1841.5px;top:1569.5px" width="11" height="20"><use href="#updown"/></svg>
<svg style="position:absolute;left:1950px;top:1569.5px" width="11" height="20"><use href="#updown"/></svg>
<svg style="position:absolute;left:2085px;top:1569.5px" width="11" height="20"><use href="#updown"/></svg>
<svg style="position:absolute;left:2226px;top:1569.5px" width="11" height="20"><use href="#updown"/></svg>
<svg style="position:absolute;left:2436px;top:1569.5px" width="11" height="20"><use href="#updown"/></svg>
<svg style="position:absolute;left:2469px;top:1567px" width="24" height="23" viewBox="0 0 24 23">
<path d="M2 10V6A5 5 0 0 1 12 6" stroke="#afb1b3" stroke-width="2.6" fill="none"/><rect x="9" y="10" width="14" height="13" fill="#afb1b3"/></svg>
<svg style="position:absolute;left:2519px;top:1566px" width="25" height="27" viewBox="0 0 25 27">
<path d="M6 0H19L20 6H25V8H0V6H5Z" fill="#afb1b3"/><path d="M4 10H21V15A8.5 8.5 0 0 1 4 15Z" fill="#afb1b3"/><circle cx="9" cy="13" r="1.3" fill="#3c3f41"/><circle cx="16" cy="13" r="1.3" fill="#3c3f41"/>
<path d="M8.5 17Q12.5 20 16.5 17" stroke="#3c3f41" stroke-width="1.4" fill="none"/><path d="M3 27Q3 21 12.5 21Q22 21 22 27Z" fill="#afb1b3"/></svg>
<div style="position:absolute;left:9px;top:171px;transform-origin:0 0;transform:rotate(-90deg);white-space:nowrap;font-family:'Liberation Sans', sans-serif;font-size:23px;line-height:23px;color:#e2e2e2"><u style="text-underline-offset:3px">1</u>: Project</div>
<svg style="position:absolute;left:10px;top:182px" width="22" height="18" viewBox="0 0 22 18"><path d="M0 0H9L11 4H22V18H0Z" fill="#afb1b3"/></svg>
<div style="position:absolute;left:9px;top:1263px;transform-origin:0 0;transform:rotate(-90deg);white-space:nowrap;font-family:'Liberation Sans', sans-serif;font-size:23px;line-height:23px;color:#bdbdbd"><u style="text-underline-offset:3px">2</u>: Favorites</div>
<svg style="position:absolute;left:8px;top:1270px" width="26" height="25" viewBox="0 0 26 25"><path d="M13 0L16.2 8.6L25.5 9L18.2 14.8L20.8 24L13 18.8L5.2 24L7.8 14.8L0.5 9L9.8 8.6Z" fill="#afb1b3"/></svg>
<div style="position:absolute;left:9px;top:1460px;transform-origin:0 0;transform:rotate(-90deg);white-space:nowrap;font-family:'Liberation Sans', sans-serif;font-size:23px;line-height:23px;color:#bdbdbd"><u style="text-underline-offset:3px">7</u>: Structure</div>
<svg style="position:absolute;left:12px;top:1472px" width="18" height="18" viewBox="0 0 18 18"><rect x="10" y="0" width="8" height="8" fill="#afb1b3"/><rect x="0" y="10" width="8" height="8" fill="#afb1b3"/><rect x="10" y="10" width="8" height="8" fill="#afb1b3"/></svg>
</div></body></html>
